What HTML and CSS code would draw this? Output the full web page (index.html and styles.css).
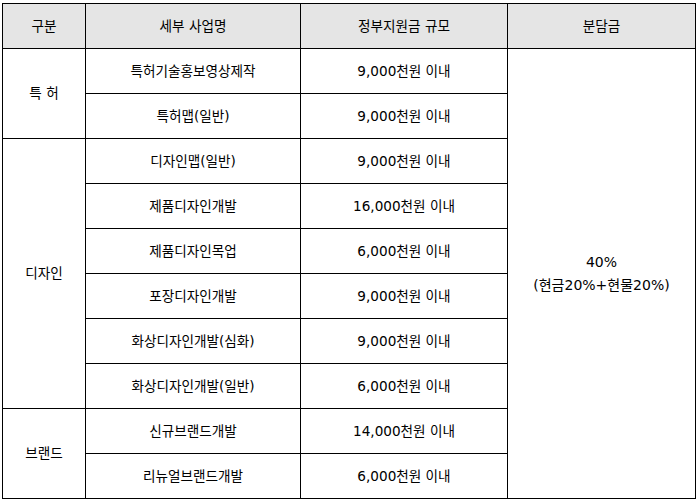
FILE: index.html
```html
<!DOCTYPE html>
<html lang="ko">
<head>
<meta charset="utf-8">
<link rel="stylesheet" href="styles.css">
</head>
<body>
<table class="grid">
  <colgroup>
    <col class="c1"><col class="c2"><col class="c3"><col class="c4">
  </colgroup>
  <thead>
    <tr><th>구분</th><th>세부 사업명</th><th>정부지원금 규모</th><th>분담금</th></tr>
  </thead>
  <tbody>
    <tr><td rowspan="2">특 허</td><td>특허기술홍보영상제작</td><td>9,000천원 이내</td><td rowspan="10" class="share">40%<br>(현금20%+현물20%)</td></tr>
    <tr><td>특허맵(일반)</td><td>9,000천원 이내</td></tr>
    <tr><td rowspan="6">디자인</td><td>디자인맵(일반)</td><td>9,000천원 이내</td></tr>
    <tr><td>제품디자인개발</td><td>16,000천원 이내</td></tr>
    <tr><td>제품디자인목업</td><td>6,000천원 이내</td></tr>
    <tr><td>포장디자인개발</td><td>9,000천원 이내</td></tr>
    <tr><td>화상디자인개발(심화)</td><td>9,000천원 이내</td></tr>
    <tr><td>화상디자인개발(일반)</td><td>6,000천원 이내</td></tr>
    <tr><td rowspan="2">브랜드</td><td>신규브랜드개발</td><td>14,000천원 이내</td></tr>
    <tr><td>리뉴얼브랜드개발</td><td>6,000천원 이내</td></tr>
  </tbody>
</table>
</body>
</html>
```

FILE: styles.css
```css
html, body {
  margin: 0;
  background: #fff;
}
body {
  padding: 3px 0 0 2px;
  font-family: "DejaVu Sans", "Noto Sans CJK KR", sans-serif;
  font-size: 13.6px;
  color: #000;
}
.grid {
  border-collapse: collapse;
  table-layout: fixed;
  width: 693px;
}
.c1 { width: 83px; }
.c2 { width: 215px; }
.c3 { width: 207px; }
.c4 { width: 188px; }
.grid th, .grid td {
  border: 1px solid #000;
  padding: 0;
  height: 44px;
  text-align: center;
  vertical-align: middle;
  font-weight: normal;
  line-height: 23px;
}
.grid th {
  background: #e5e5e5;
}
.share {
  font-size: 14px;
}
```
